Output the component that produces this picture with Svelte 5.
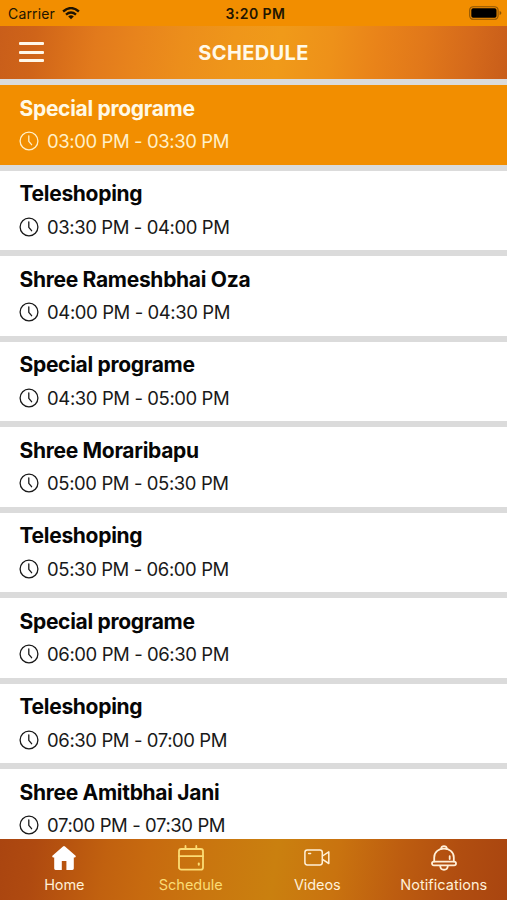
<script>
  const items = [
    ['Special programe', '03:00 PM - 03:30 PM'],
    ['Teleshoping', '03:30 PM - 04:00 PM'],
    ['Shree Rameshbhai Oza', '04:00 PM - 04:30 PM'],
    ['Special programe', '04:30 PM - 05:00 PM'],
    ['Shree Moraribapu', '05:00 PM - 05:30 PM'],
    ['Teleshoping', '05:30 PM - 06:00 PM'],
    ['Special programe', '06:00 PM - 06:30 PM'],
    ['Teleshoping', '06:30 PM - 07:00 PM'],
    ['Shree Amitbhai Jani', '07:00 PM - 07:30 PM']
  ];
</script>

<div class="screen">
  <div class="status">
    <div class="carrier">
      <span>Carrier</span>
      <svg width="18" height="13" viewBox="0 0 18 13" fill="none" stroke="#1d1302" stroke-width="2.4">
        <path d="M1.1 4.5 Q9 -2.3 16.9 4.5" />
        <path d="M4 7.6 Q9 3.4 14 7.6" />
        <path d="M9 12.3 L6.2 9.5 Q9 7.2 11.8 9.5 Z" fill="#1d1302" stroke="none" />
      </svg>
    </div>
    <span class="clock">3:20 PM</span>
    <svg class="battery" width="33" height="14" viewBox="0 0 33 14">
      <rect x="0.7" y="0.7" width="28.4" height="12.6" rx="3.6" fill="none" stroke="#8b5405" stroke-width="1.1" />
      <rect x="2.3" y="2.3" width="25.2" height="9.4" rx="1.8" fill="#000" />
      <path d="M30.6 5 Q32.4 5.4 32.4 7 T30.6 9 Z" fill="#8b5405" />
    </svg>
  </div>

  <header>
    <div class="menu"><i></i><i></i><i></i></div>
    <h1>SCHEDULE</h1>
  </header>

  <main>
    {#each items as [title, time], i}
      <section class:active={i === 0}>
        <h2>{title}</h2>
        <div class="time">
          <svg width="20" height="20" viewBox="0 0 20 20" fill="none" stroke="currentColor" stroke-width="1.3" stroke-linecap="round" stroke-linejoin="round">
            <circle cx="10" cy="10" r="8.9" />
            <path d="M9.8 4.8 V10.3 L12.6 13.7" />
          </svg>
          <span>{time}</span>
        </div>
      </section>
    {/each}
  </main>

  <nav>
    <div class="tab home">
      <svg width="26" height="26" viewBox="0 0 26 26" fill="#fff">
        <path d="M13 1 Q13.5 1 14 1.5 L24.6 10.8 Q25.4 12.4 23.7 12.4 H22.8 V23.6 Q22.8 25 21.4 25 H15.4 V16 H10.8 V25 H4.6 Q3.2 25 3.2 23.6 V12.4 H2.3 Q0.6 12.4 1.4 10.8 L12 1.5 Q12.5 1 13 1 Z" />
      </svg>
      <span>Home</span>
    </div>
    <div class="tab schedule">
      <svg width="26" height="26" viewBox="0 0 26 26" fill="none" stroke="currentColor" stroke-width="1.8" stroke-linecap="round">
        <rect x="1" y="4" width="24" height="20.6" rx="2.2" />
        <path d="M1 11.2 H25 M7.5 1 V4 M18.3 1 V4" />
        <path d="M20.8 18.6 V19.8" stroke-width="2" />
      </svg>
      <span>Schedule</span>
    </div>
    <div class="tab videos">
      <svg width="26" height="26" viewBox="0 0 26 26" fill="none" stroke="currentColor" stroke-width="1.5" stroke-linecap="round" stroke-linejoin="round">
        <rect x="0.9" y="5" width="17.4" height="14.9" rx="2.4" />
        <path d="M18.5 11 L24.8 6.8 V18.5 L18.5 14.4 M4.6 8.6 H6.6" />
      </svg>
      <span>Videos</span>
    </div>
    <div class="tab notifications">
      <svg width="26" height="26" viewBox="0 0 26 26" fill="none" stroke="currentColor" stroke-width="1.8" stroke-linecap="round" stroke-linejoin="round">
        <path d="M10.2 3.8 C10 0.2 16 0.2 15.8 3.8" />
        <path d="M3.2 16.4 V12.4 C3.2 0.8 22.8 0.8 22.8 12.4 V16.4" />
        <rect x="1" y="16.6" width="24" height="3.8" rx="1.9" />
        <path d="M9.2 21 C9.6 26 16.4 26 16.8 21 M18.7 11.2 V14" />
      </svg>
      <span>Notifications</span>
    </div>
  </nav>
</div>

<style>
  .screen {
    width: 507px;
    height: 900px;
    overflow: hidden;
    display: flex;
    flex-direction: column;
    background: #fff;
    font-family: Inter, "Liberation Sans", sans-serif;
  }
  .status {
    height: 25.5px;
    flex: none;
    box-sizing: border-box;
    padding: 0 5px 0 8px;
    display: grid;
    grid-template-columns: 1fr auto 1fr;
    align-items: center;
    background: #f28e00;
    color: #211500;
    font-size: 14px;
    line-height: 24px;
  }
  .carrier { display: flex; align-items: center; gap: 7px; }
  .clock { font-weight: 600; font-size: 14px; letter-spacing: 0.45px; padding: 2px 0 0 1px; }
  .carrier span { padding-top: 2px; letter-spacing: 0.15px; }
  .battery { justify-self: end; }
  header {
    height: 53.5px;
    flex: none;
    display: grid;
    grid-template-columns: 1fr auto 1fr;
    align-items: center;
    background: linear-gradient(98deg, #c95e1a 0%, #cf6419 7%, #d96f1a 13%, #e27a1c 19%, #e8841c 27%, #ec8e1b 36%, #ef961a 46%, #f09a19 55%, #ee9119 65%, #e98319 74%, #e1781a 83%, #d56a1b 92%, #c85d1a 100%);
  }
  .menu {
    width: 25px;
    margin-left: 19px;
    display: flex;
    flex-direction: column;
    gap: 5.3px;
  }
  .menu i { height: 3px; border-radius: 1px; background: #fff8ea; }
  h1 { margin: 0; padding-top: 1px; color: #fff9e9; font-size: 20px; line-height: 26px; font-weight: 700; letter-spacing: 0.35px; }
  main { flex: 1; min-height: 0; overflow: hidden; }
  section {
    height: 85.5px;
    box-sizing: border-box;
    border-top: 6px solid #dbdbdb;
    padding: 10.5px 19.5px 0;
    color: #060606;
  }
  h2 { margin: 0; font-size: 21px; line-height: 26px; font-weight: 700; letter-spacing: -0.3px; white-space: nowrap; }
  .time {
    display: flex;
    align-items: center;
    gap: 8.6px;
    margin: 7.7px 0 0 -1px;
    height: 24px;
    font-size: 18.5px;
    line-height: 24px;
    letter-spacing: -0.41px;
    color: #191919;
    white-space: nowrap;
  }
  .active { background: #f28e00; color: #fff9e5; }
  .active .time { color: #fff0c8; }
  nav {
    height: 61px;
    flex: none;
    box-sizing: border-box;
    padding-left: 1px;
    display: grid;
    grid-template-columns: repeat(4, 1fr);
    background: linear-gradient(99deg, #aa4510 0%, #af4a10 7%, #b8550f 14%, #c1610f 21%, #c76a0f 29%, #c9750f 40%, #ca800f 54%, #c9730f 66%, #bd5d10 78%, #b14e10 89%, #a94510 100%);
  }
  .tab {
    display: flex;
    flex-direction: column;
    align-items: center;
    padding-top: 6px;
    gap: 4px;
    color: #fff0d7;
    font-size: 14.5px;
    line-height: 20px;
  }
  .schedule { color: #fbdc75; }
  .home, .videos { letter-spacing: -0.1px; }
  .notifications { letter-spacing: 0.05px; }
</style>
